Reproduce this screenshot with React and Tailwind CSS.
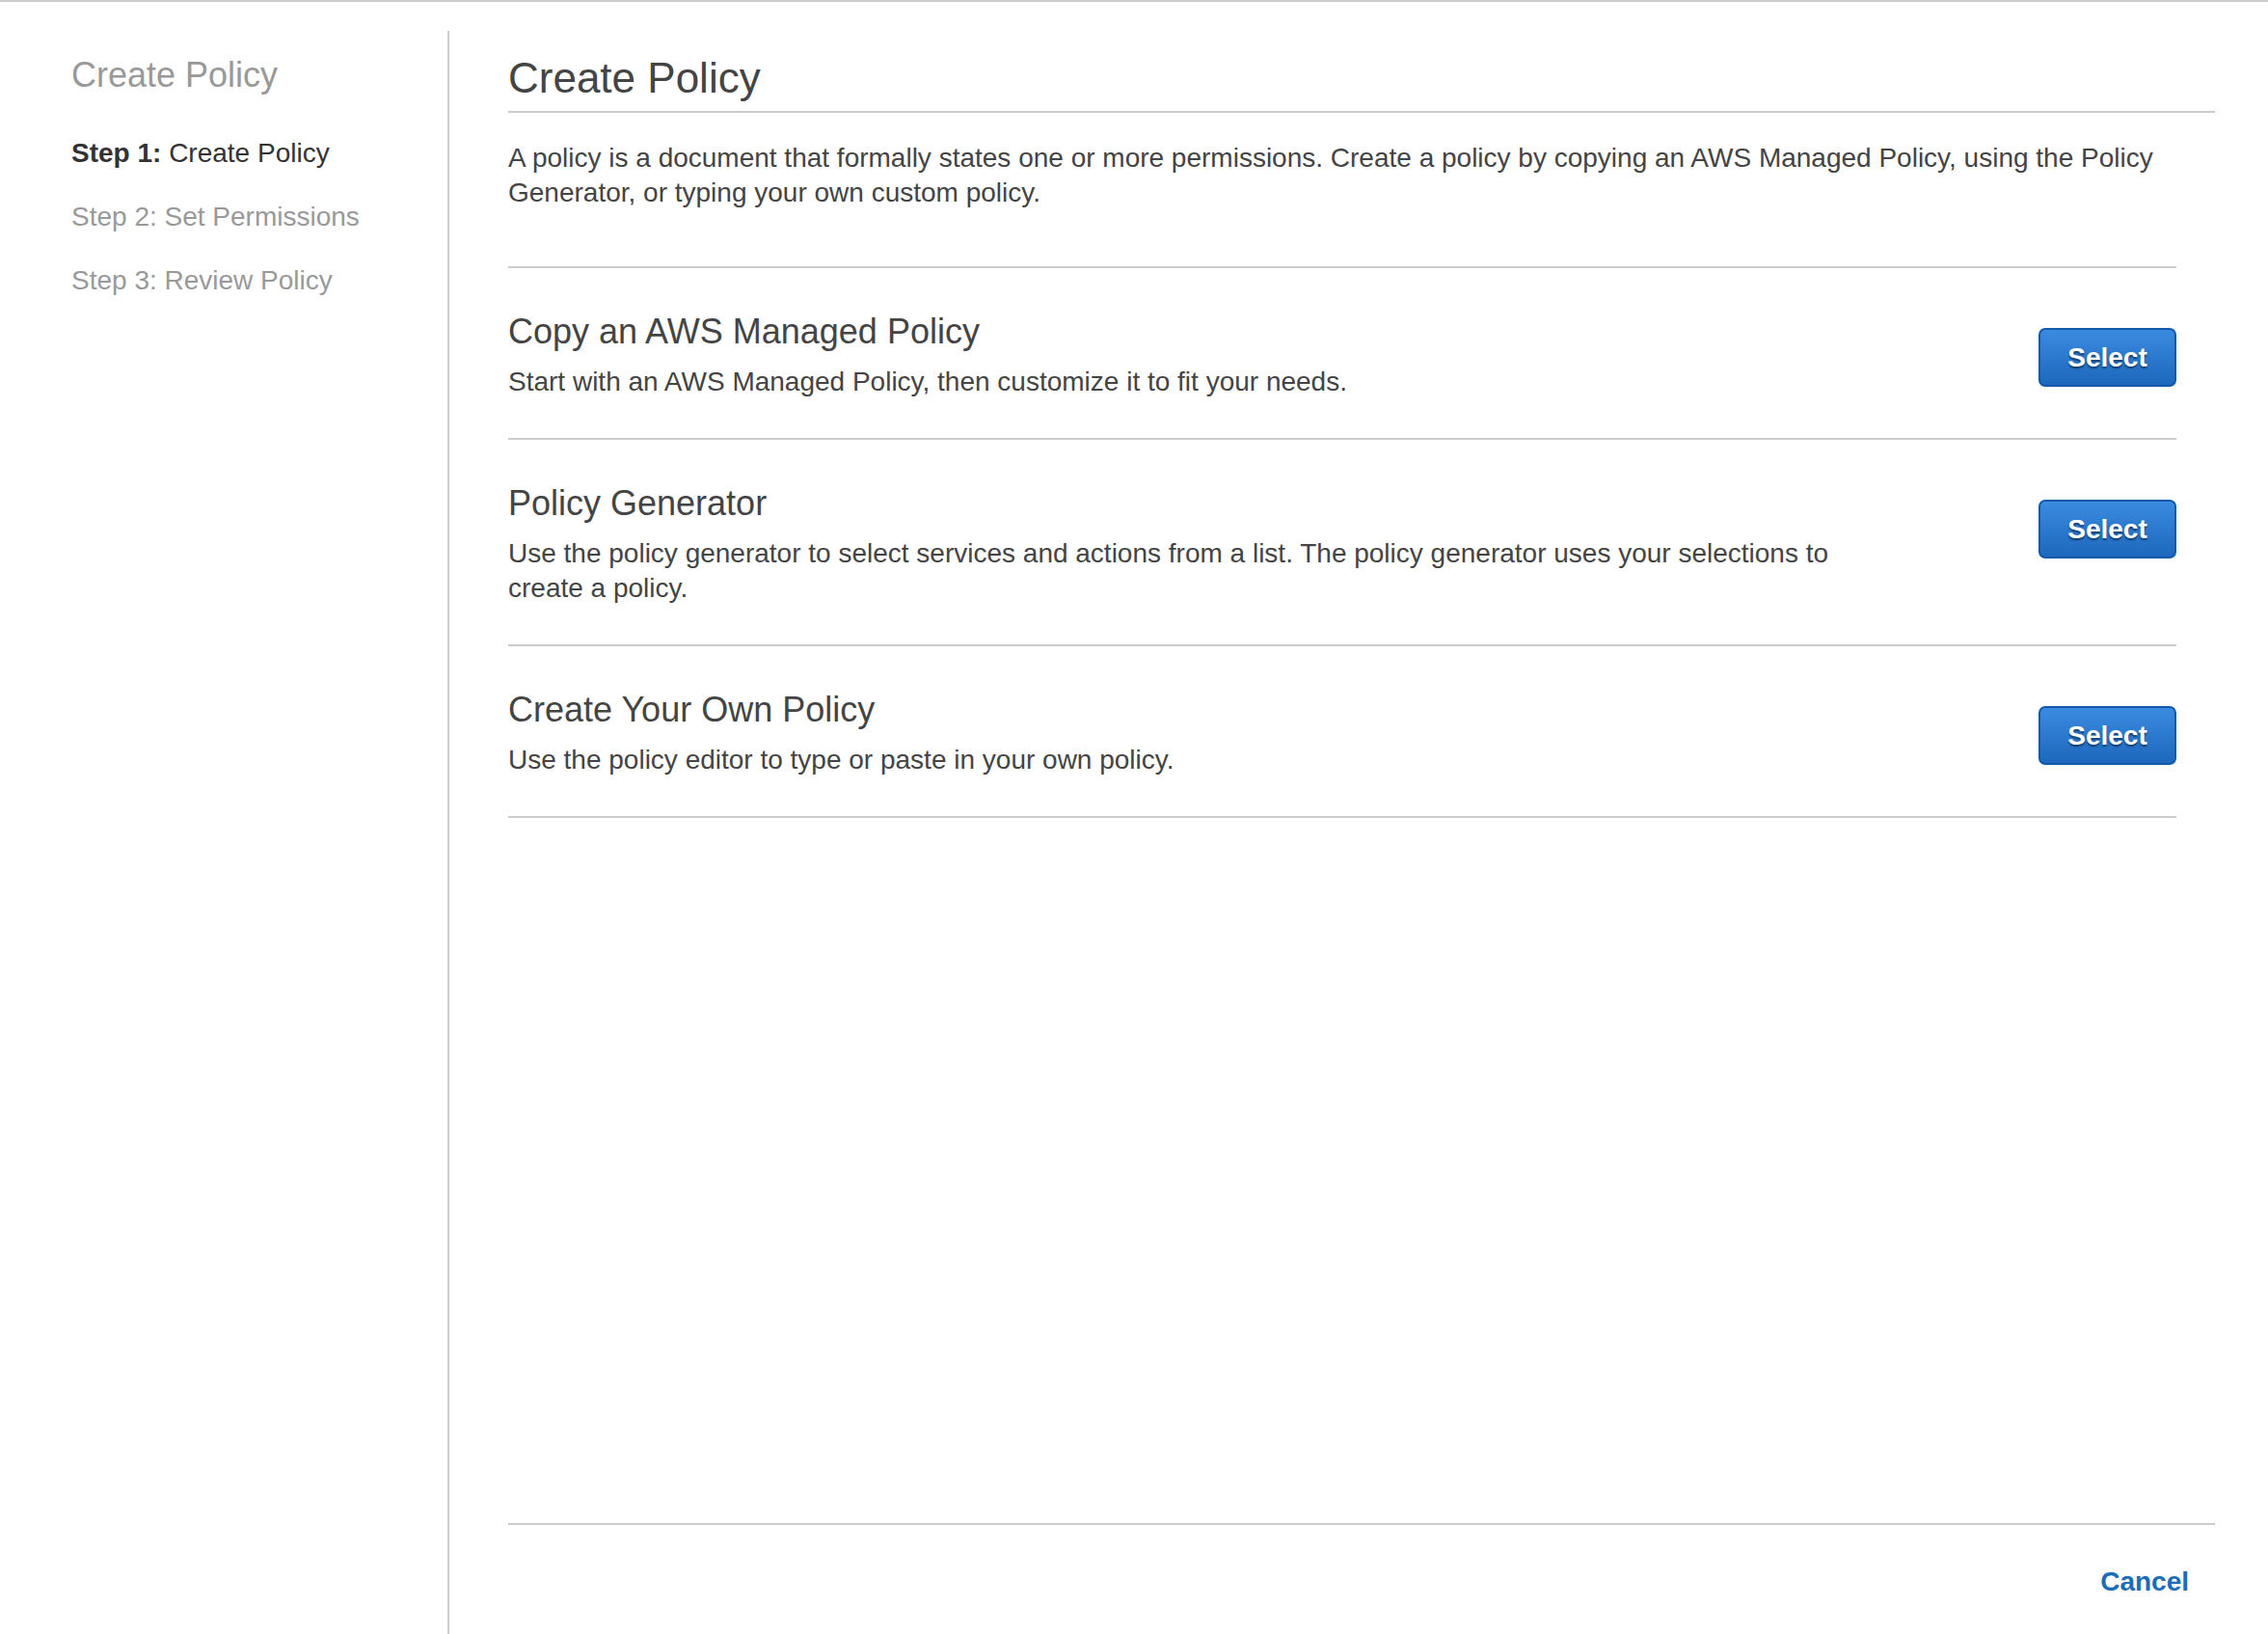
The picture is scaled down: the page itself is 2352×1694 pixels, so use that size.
const steps = [
  { label: "Step 1:", rest: " Create Policy", active: true },
  { label: "Step 2:", rest: " Set Permissions", active: false },
  { label: "Step 3:", rest: " Review Policy", active: false }
];

const options = [
  {
    title: "Copy an AWS Managed Policy",
    text: "Start with an AWS Managed Policy, then customize it to fit your needs."
  },
  {
    title: "Policy Generator",
    text: "Use the policy generator to select services and actions from a list. The policy generator uses your selections to create a policy."
  },
  {
    title: "Create Your Own Policy",
    text: "Use the policy editor to type or paste in your own policy."
  }
];

function SelectButton() {
  return (
    <button
      type="button"
      className="mt-[20px] flex h-[61px] w-[143px] shrink-0 items-center justify-center rounded-[7px] border-2 border-[#1259ab] bg-[linear-gradient(180deg,#3a8be0_0%,#1c68bd_100%)] text-[28px] font-bold text-white [text-shadow:0_2px_2px_rgba(0,0,0,0.5)]"
    >
      Select
    </button>
  );
}

export default function App() {
  return (
    <div className="flex min-h-[1694px] flex-col border-t-2 border-[#cccccc] bg-white font-['Liberation_Sans',Arial,sans-serif] text-[#444]">
      <div className="mt-[30px] flex flex-1">
        <aside className="w-[466px] shrink-0 border-r-2 border-[#cccccc] pl-[74px] pt-[22px]">
          <h2 className="text-[36px] leading-[48px] text-[#999]">Create Policy</h2>
          <nav className="mt-[39px] space-y-[30px]">
            {steps.map((s) => (
              <div
                key={s.label}
                className={`text-[28px] leading-[36px] ${s.active ? "text-[#333]" : "text-[#999]"}`}
              >
                <span className={s.active ? "font-bold" : ""}>{s.label}</span>
                {s.rest}
              </div>
            ))}
          </nav>
        </aside>

        <main className="flex flex-1 flex-col pl-[61px] pr-[55px] pt-[21px]">
          <h1 className="border-b-2 border-[#cccccc] pb-[6px] text-[44px] leading-[56px] text-[#444]">
            Create Policy
          </h1>
          <p className="mt-[29px] text-[28px] leading-[36px] text-[#444]">
            A policy is a document that formally states one or more permissions. Create a policy by copying an AWS Managed Policy, using the Policy Generator, or typing your own custom policy.
          </p>

          <div className="mr-[40px] mt-[58px] border-t-2 border-[#cccccc]">
            {options.map((o) => (
              <div key={o.title} className="flex items-start justify-between border-b-2 border-[#cccccc] pb-[40px] pt-[42px]">
                <div className="max-w-[1420px]">
                  <h3 className="text-[36px] leading-[48px] text-[#444]">{o.title}</h3>
                  <p className="mt-[10px] text-[28px] leading-[36px] text-[#444]">{o.text}</p>
                </div>
                <SelectButton />
              </div>
            ))}
          </div>

          <div className="flex-1" />

          <footer className="border-t-2 border-[#cccccc] pb-[36px] pr-[27px] pt-[41px]">
            <div className="flex justify-end">
              <button type="button" className="text-[28px] font-bold leading-[36px] text-[#1a6db6]">
                Cancel
              </button>
            </div>
          </footer>
        </main>
      </div>
    </div>
  );
}
